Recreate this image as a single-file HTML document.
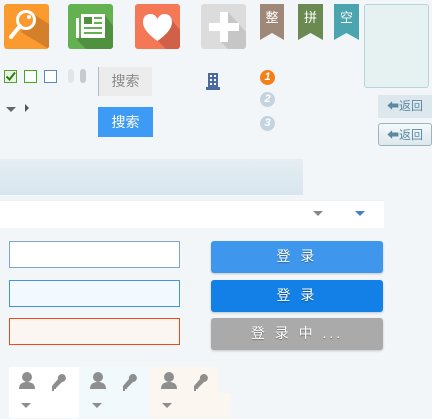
<!DOCTYPE html>
<html><head><meta charset="utf-8"><style>
*{margin:0;padding:0;box-sizing:border-box}
body{width:432px;height:419px;background:#f2f6f9;position:relative;overflow:hidden;font-family:"Liberation Sans","Noto Sans CJK SC",sans-serif}
.a{position:absolute}
.ic{border-radius:3px;overflow:hidden}
.rb{color:#fff;font-size:13px;text-align:center;line-height:24px}
.cb{width:13px;height:13px;border:1px solid;background:#fff}
.inp{border:1px solid;width:171px;height:27px}
.btn{width:172px;height:32px;border-radius:3px;color:#fff;font-size:14px;text-align:center;line-height:31px;letter-spacing:3px;text-shadow:0 1px 1px rgba(0,0,0,.35);box-shadow:0 1px 2px rgba(0,0,0,.2);white-space:pre}
.fb{width:54px;height:23px;color:#5b8aa0;font-size:12px;line-height:22px;text-align:center}
.tri{width:0;height:0;border-left:5px solid transparent;border-right:5px solid transparent;border-top:5px solid #888}
</style></head><body>
<div class="a ic" style="left:4px;top:4px;width:45px;height:45px;background:#fb9a2f">
<svg width="45" height="45"><path d="M17 28 L45 45 L45 20 L26 8 Z" fill="#d4802a"/><circle cx="22" cy="16" r="8.5" fill="#fb9a2f" stroke="#fff" stroke-width="3"/><path d="M16 22 L7 33" stroke="#fff" stroke-width="4" stroke-linecap="round"/><circle cx="25" cy="13" r="2" fill="#fff"/></svg></div>
<div class="a ic" style="left:68px;top:4px;width:45px;height:45px;background:#64b152">
<svg width="45" height="45"><path d="M9 36 L18 45 L45 45 L45 22 L36 10 Z" fill="#4f913f"/><path d="M8 14 h3 v20 h-3z M13 10 h24 v24 h-24z" fill="#fff"/><rect x="16" y="13" width="8" height="7" fill="#4f913f"/><rect x="26" y="13" width="8" height="2" fill="#64b152"/><rect x="26" y="18" width="8" height="2" fill="#64b152"/><rect x="16" y="23" width="18" height="2" fill="#64b152"/><rect x="16" y="28" width="18" height="2" fill="#64b152"/></svg></div>
<div class="a ic" style="left:135px;top:4px;width:45px;height:45px;background:#f47756">
<svg width="45" height="45"><path d="M22 36 L31 45 L45 45 L45 26 L35 14 Z" fill="#d06048"/><path d="M22.5 37 C10 28 8 22 8 18 C8 12 12 10 15.5 10 C19 10 21 12 22.5 15 C24 12 26 10 29.5 10 C33 10 37 12 37 18 C37 22 35 28 22.5 37Z" fill="#fff"/></svg></div>
<div class="a ic" style="left:201px;top:4px;width:45px;height:45px;background:#dcdcdc">
<svg width="45" height="45"><path d="M19 37 L27 45 L45 45 L45 28 L27 8 Z" fill="#c6c6c6"/><rect x="19" y="8" width="8" height="30" fill="#fff"/><rect x="8" y="19" width="30" height="8" fill="#fff"/></svg></div>
<div class="a" style="left:260px;top:4px"><svg width="24" height="36"><path d="M0 0H24V36L12 29L0 36Z" fill="#a08878"/></svg><div class="a rb" style="left:0;top:2px;width:24px">整</div></div>
<div class="a" style="left:298px;top:4px"><svg width="25" height="36"><path d="M0 0H25V36L12.5 29L0 36Z" fill="#6a8a52"/></svg><div class="a rb" style="left:0;top:2px;width:25px">拼</div></div>
<div class="a" style="left:334px;top:4px"><svg width="25" height="36"><path d="M0 0H25V36L12.5 29L0 36Z" fill="#4aa5ae"/></svg><div class="a rb" style="left:0;top:2px;width:25px">空</div></div>
<div class="a" style="left:364px;top:4px;width:65px;height:84px;background:#e6f1f2;border:1px solid #b8d3de;border-radius:3px"></div>
<div class="a cb" style="left:4px;top:70px;border-color:#5a9e3a;background:#e8f3e0"><svg width="11" height="11" style="position:absolute;left:0;top:0"><path d="M1.5 5.5 L4.5 8.5 L10 1.5" stroke="#2f7d1a" stroke-width="2" fill="none"/></svg></div>
<div class="a cb" style="left:24px;top:70px;border-color:#3fae1c"></div>
<div class="a cb" style="left:44px;top:70px;border-color:#5b8ab5"></div>
<div class="a" style="left:68px;top:69px;width:6px;height:14px;border-radius:3px;background:#e3e6e9"></div>
<div class="a" style="left:80px;top:69px;width:6px;height:14px;border-radius:3px;background:#c6cbcf"></div>
<div class="a tri" style="left:6px;top:107px;border-top-color:#666"></div>
<div class="a" style="left:25px;top:104px;width:0;height:0;border-top:4px solid transparent;border-bottom:4px solid transparent;border-left:4px solid #555"></div>
<div class="a" style="left:98px;top:67px;width:54px;height:29px;background:#ececec;border-left:1px solid #a9bccb;color:#888;font-size:14px;line-height:29px;text-align:center">搜索</div>
<div class="a" style="left:98px;top:107px;width:55px;height:30px;background:#3d9bf5;color:#fff;font-size:14px;line-height:30px;text-align:center">搜索</div>
<svg class="a" style="left:205px;top:73px" width="16" height="17"><rect x="3" y="0" width="10" height="16" fill="#4a6aa0"/><rect x="1" y="14" width="14" height="3" fill="#4a6aa0"/><g fill="#fff"><rect x="5" y="2" width="2" height="2"/><rect x="9" y="2" width="2" height="2"/><rect x="5" y="6" width="2" height="2"/><rect x="9" y="6" width="2" height="2"/><rect x="5" y="10" width="2" height="2"/><rect x="9" y="10" width="2" height="2"/></g></svg>
<div class="a" style="left:260px;top:70px;width:15px;height:15px;border-radius:50%;background:#f57f17;color:#fff;font-size:11px;font-weight:bold;font-style:italic;text-align:center;line-height:15px">1</div>
<div class="a" style="left:260px;top:92px;width:15px;height:15px;border-radius:50%;background:#c3d3df;color:#fff;font-size:11px;font-weight:bold;font-style:italic;text-align:center;line-height:15px">2</div>
<div class="a" style="left:260px;top:116px;width:15px;height:15px;border-radius:50%;background:#c3d3df;color:#fff;font-size:11px;font-weight:bold;font-style:italic;text-align:center;line-height:15px">3</div>
<div class="a fb" style="left:378px;top:95px;background:#dde8ee">⬅返回</div>
<div class="a fb" style="left:378px;top:123px;background:linear-gradient(#f4f8fa,#dde8ee);border:1px solid #9fb3c0;border-radius:3px">⬅返回</div>
<div class="a" style="left:0;top:159px;width:303px;height:36px;background:linear-gradient(#e4edf2,#d8e6ee)"></div>
<div class="a" style="left:0;top:200px;width:384px;height:28px;background:#fff;border-top:1px solid #eef1f3"></div>
<div class="a tri" style="left:313px;top:211px"></div>
<div class="a tri" style="left:355px;top:211px;border-top-color:#4a7fd0"></div>
<div class="a inp" style="left:9px;top:241px;border-color:#7fa6c8;background:#fff"></div>
<div class="a inp" style="left:9px;top:280px;border-color:#3e95e8;background:#f3faff"></div>
<div class="a inp" style="left:9px;top:318px;border-color:#f14a12;background:#fbf6f1"></div>
<div class="a btn" style="left:211px;top:241px;background:#3f97ed">登 录</div>
<div class="a btn" style="left:211px;top:280px;background:#1280e6">登 录</div>
<div class="a btn" style="left:211px;top:318px;background:#aaaaaa">登 录 中 ...</div>
<div class="a" style="left:9px;top:367px;width:70px;height:51px;background:#fff"></div>
<div class="a" style="left:79px;top:367px;width:70px;height:51px;background:#f2f9fd"></div>
<div class="a" style="left:149px;top:367px;width:70px;height:26px;background:#fbf6f0"></div>
<div class="a" style="left:149px;top:393px;width:82px;height:25px;background:#fbf6f0"></div>
<svg class="a" style="left:0;top:367px" width="232" height="52">
<g fill="#8e8e8e">
<g id="u"><circle cx="27" cy="10" r="5"/><path d="M19 22 Q19 15 27 15 Q35 15 35 22Z"/><path d="M52 19 L58 12 A4 4 0 1 1 62 15 L56 21 V22 H54 V24 H52Z"/></g>
<use href="#u" x="71"/><use href="#u" x="142"/>
<path d="M21 36h10l-5 5z M92 36h10l-5 5z M162 36h10l-5 5z"/>
</g></svg>
</body></html>
